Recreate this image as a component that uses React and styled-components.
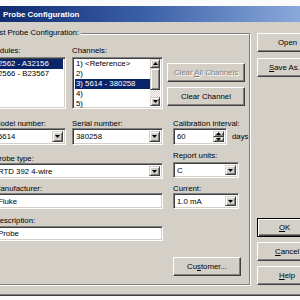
import React from 'react';
import styled, { createGlobalStyle } from 'styled-components';

const Global = createGlobalStyle`
  html, body { margin: 0; padding: 0; background: #fbfbfb; }
  body { font-family: "Liberation Sans", Arial, sans-serif; font-size: 7.8px; color: #000; }
  * { box-sizing: border-box; }
`;

const Screen = styled.div`
  width: 300px;
  height: 300px;
  overflow: hidden;
  background: #fbfbfb;
`;

const Window = styled.div`
  margin-top: 6px;
  margin-left: -20px;
  width: 380px;
  background: #d4d0c8;
  border-bottom: 1px solid #404040;
  box-shadow: inset 0 -1px 0 #808080;
`;

const TitleBar = styled.div`
  height: 16px;
  display: flex;
  align-items: center;
  padding-left: 23px;
  background: linear-gradient(90deg, #0a246a 0px, #3a5ea6 160px, #8aa8da 320px, #a6caf0 380px);
  color: #fff;
  font-weight: bold;
  font-size: 7.9px;
`;

const Body = styled.div`
  display: flex;
  gap: 7px;
  padding: 6px 0 10px 6px;
`;

const Group = styled.fieldset`
  margin: 0;
  width: 264px;
  flex: none;
  padding: 8px 4px 8px 7px;
  border: 1px solid #808080;
  box-shadow: inset 1px 1px 0 #fff, 1px 1px 0 #fff;
  min-inline-size: 0;
`;

const Legend = styled.legend`
  margin-left: -5px;
  padding: 0 2px;
  height: 10px;
  line-height: 10px;
  background: #d4d0c8;
`;

const Row = styled.div`
  display: flex;
  gap: ${p => p.$gap || 0}px;
  margin-top: ${p => p.$mt || 0}px;
`;

const Col = styled.div`
  display: flex;
  flex-direction: column;
  width: ${p => p.$w}px;
  flex: none;
  padding-top: ${p => p.$pt || 0}px;
  margin-left: ${p => p.$ml || 0}px;
  gap: ${p => p.$gap || 0}px;
`;

const Label = styled.div`
  height: 9px;
  line-height: 9px;
  white-space: nowrap;
  margin-top: ${p => p.$mt || 0}px;
  margin-bottom: ${p => p.$mb ?? 0}px;
  margin-left: ${p => p.$ml || 0}px;
`;

const ListBox = styled.div`
  height: 52px;
  background: #fff;
  border: 1px solid;
  border-color: #808080 #fff #fff #808080;
  box-shadow: inset 1px 1px 0 #404040, inset -1px -1px 0 #d4d0c8;
  padding: 1px 2px 2px 2px;
  display: flex;
  overflow: hidden;
`;

const Items = styled.div`
  flex: 1;
  display: flex;
  flex-direction: column;
  min-width: 0;
`;

const Item = styled.div`
  height: 10px;
  line-height: 10px;
  flex: none;
  padding-left: 1px;
  white-space: nowrap;
  background: ${p => (p.$sel ? '#0a246a' : 'transparent')};
  color: ${p => (p.$sel ? '#fff' : '#000')};
`;

const ScrollBar = styled.div`
  width: 10px;
  flex: none;
  display: flex;
  flex-direction: column;
  background: repeating-conic-gradient(#fff 0 25%, #d4d0c8 0 50%) 0 0 / 2px 2px;
`;

const ArrowBtn = styled.div`
  height: 9px;
  flex: none;
  background: #d4d0c8;
  border: 1px solid;
  border-color: #d4d0c8 #404040 #404040 #d4d0c8;
  box-shadow: inset 1px 1px 0 #fff, inset -1px -1px 0 #808080;
  display: flex;
  align-items: center;
  justify-content: center;
`;

const Thumb = styled(ArrowBtn)`
  height: 22px;
`;

const Spacer = styled.div`
  flex: 1;
`;

const Tri = ({ up }) => (
  <svg width="5" height="3" viewBox="0 0 5 3">
    <polygon points={up ? '2.5,0 5,3 0,3' : '0,0 5,0 2.5,3'} fill="#000" />
  </svg>
);

const Button = styled.div`
  height: 19px;
  width: ${p => (p.$w ? `${p.$w}px` : 'auto')};
  flex: none;
  margin-top: ${p => p.$mt || 0}px;
  background: #d4d0c8;
  border: 1px solid;
  border-color: ${p => (p.$def ? '#000' : '#fff #404040 #404040 #fff')};
  box-shadow: ${p =>
    p.$def
      ? 'inset 1px 1px 0 #fff, inset -1px -1px 0 #404040, inset -2px -2px 0 #808080'
      : 'inset -1px -1px 0 #808080, inset 1px 1px 0 #d4d0c8'};
  display: flex;
  align-items: center;
  justify-content: ${p => (p.$left ? 'flex-start' : 'center')};
  padding-left: ${p => p.$pl || 0}px;
  white-space: nowrap;
  color: ${p => (p.$disabled ? '#808080' : '#000')};
  text-shadow: ${p => (p.$disabled ? '1px 1px 0 #fff' : 'none')};
`;

const U = styled.span`
  text-decoration: underline;
`;

const Field = styled.div`
  height: ${p => p.$h || 17}px;
  width: ${p => (p.$w ? `${p.$w}px` : 'auto')};
  flex: none;
  background: #fff;
  border: 1px solid;
  border-color: #808080 #fff #fff #808080;
  box-shadow: inset 1px 1px 0 #404040, inset -1px -1px 0 #d4d0c8;
  display: flex;
  align-items: stretch;
  padding: 2px 2px 2px 3px;
  white-space: nowrap;
`;

const FieldText = styled.span`
  flex: 1;
  display: flex;
  align-items: center;
  min-width: 0;
  overflow: hidden;
`;

const DropBtn = styled.div`
  width: 11px;
  flex: none;
  background: #d4d0c8;
  border: 1px solid;
  border-color: #d4d0c8 #404040 #404040 #d4d0c8;
  box-shadow: inset 1px 1px 0 #fff, inset -1px -1px 0 #808080;
  display: flex;
  align-items: center;
  justify-content: center;
`;

const SpinCol = styled.div`
  width: 11px;
  flex: none;
  display: flex;
  flex-direction: column;
`;

const SpinBtn = styled(DropBtn)`
  flex: 1;
  width: 100%;
`;

const Inline = styled.div`
  display: flex;
  align-items: center;
  gap: 5px;
`;

const RightCol = styled.div`
  display: flex;
  flex-direction: column;
  width: 76px;
  flex: none;
  padding-top: 5px;
  gap: 6px;
`;

const BottomGroup = styled.div`
  margin-top: 135px;
  display: flex;
  flex-direction: column;
  gap: 5px;
`;

const Combo = ({ value, w, h }) => (
  <Field $w={w} $h={h}>
    <FieldText>{value}</FieldText>
    <DropBtn>
      <Tri />
    </DropBtn>
  </Field>
);

export default function App() {
  return (
    <Screen>
      <Global />
      <Window>
        <TitleBar>Probe Configuration</TitleBar>
        <Body>
          <Group>
            <Legend>Test Probe Configuration:</Legend>
            <Row>
              <Col $w={72}>
                <Label $mb={2} $ml={-5}>Modules:</Label>
                <ListBox>
                  <Items>
                    <Item $sel>2562 - A32156</Item>
                    <Item>2566 - B23567</Item>
                  </Items>
                </ListBox>
              </Col>
              <Col $w={91} $ml={6}>
                <Label $mb={2}>Channels:</Label>
                <ListBox>
                  <Items>
                    <Item>1) &lt;Reference&gt;</Item>
                    <Item>2)</Item>
                    <Item $sel>3) 5614 - 380258</Item>
                    <Item>4)</Item>
                    <Item>5)</Item>
                  </Items>
                  <ScrollBar>
                    <ArrowBtn>
                      <Tri up />
                    </ArrowBtn>
                    <Thumb />
                    <Spacer />
                    <ArrowBtn>
                      <Tri />
                    </ArrowBtn>
                  </ScrollBar>
                </ListBox>
              </Col>
              <Col $w={78} $pt={17} $gap={5} $ml={4}>
                <Button $disabled>
                  <span>
                    Clear <U>A</U>ll Channels
                  </span>
                </Button>
                <Button>
                  <span>Clear Channel</span>
                </Button>
              </Col>
            </Row>
            <Row $mt={10}>
              <Col $w={169}>
                <Row $gap={6}>
                  <Col $w={72}>
                    <Label>Model number:</Label>
                    <Combo value="5614" />
                  </Col>
                  <Col $w={91}>
                    <Label>Serial number:</Label>
                    <Combo value="380258" />
                  </Col>
                </Row>
                <Label $mt={9}>Probe type:</Label>
                <Combo value="RTD 392 4-wire" h={16} />
                <Label $mt={5}>Manufacturer:</Label>
                <Field $h={16}>
                  <FieldText>Fluke</FieldText>
                </Field>
                <Label $mt={7} $mb={1}>Description:</Label>
                <Field $h={15}>
                  <FieldText>Probe</FieldText>
                </Field>
              </Col>
              <Col $w={75} $ml={10}>
                <Label>Calibration interval:</Label>
                <Inline>
                  <Field $w={54}>
                    <FieldText>60</FieldText>
                    <SpinCol>
                      <SpinBtn>
                        <Tri up />
                      </SpinBtn>
                      <SpinBtn>
                        <Tri />
                      </SpinBtn>
                    </SpinCol>
                  </Field>
                  <span>days</span>
                </Inline>
                <Label $mt={6} $mb={2}>Report units:</Label>
                <Combo value="C" w={66} h={16} />
                <Label $mt={6}>Current:</Label>
                <Combo value="1.0 mA" w={66} h={16} />
                <Button $w={68} $mt={48}>
                  <span>
                    Cu<U>s</U>tomer...
                  </span>
                </Button>
              </Col>
            </Row>
          </Group>
          <RightCol>
            <Button $left $pl={20}>Open</Button>
            <Button $left $pl={11}>
              <span>
                <U>S</U>ave As...
              </span>
            </Button>
            <BottomGroup>
              <Button $def $left $pl={21}>
                <span>
                  <U>O</U>K
                </span>
              </Button>
              <Button $left $pl={17}>
                <span>
                  <U>C</U>ancel
                </span>
              </Button>
              <Button $left $pl={21}>
                <span>
                  <U>H</U>elp
                </span>
              </Button>
            </BottomGroup>
          </RightCol>
        </Body>
      </Window>
    </Screen>
  );
}
